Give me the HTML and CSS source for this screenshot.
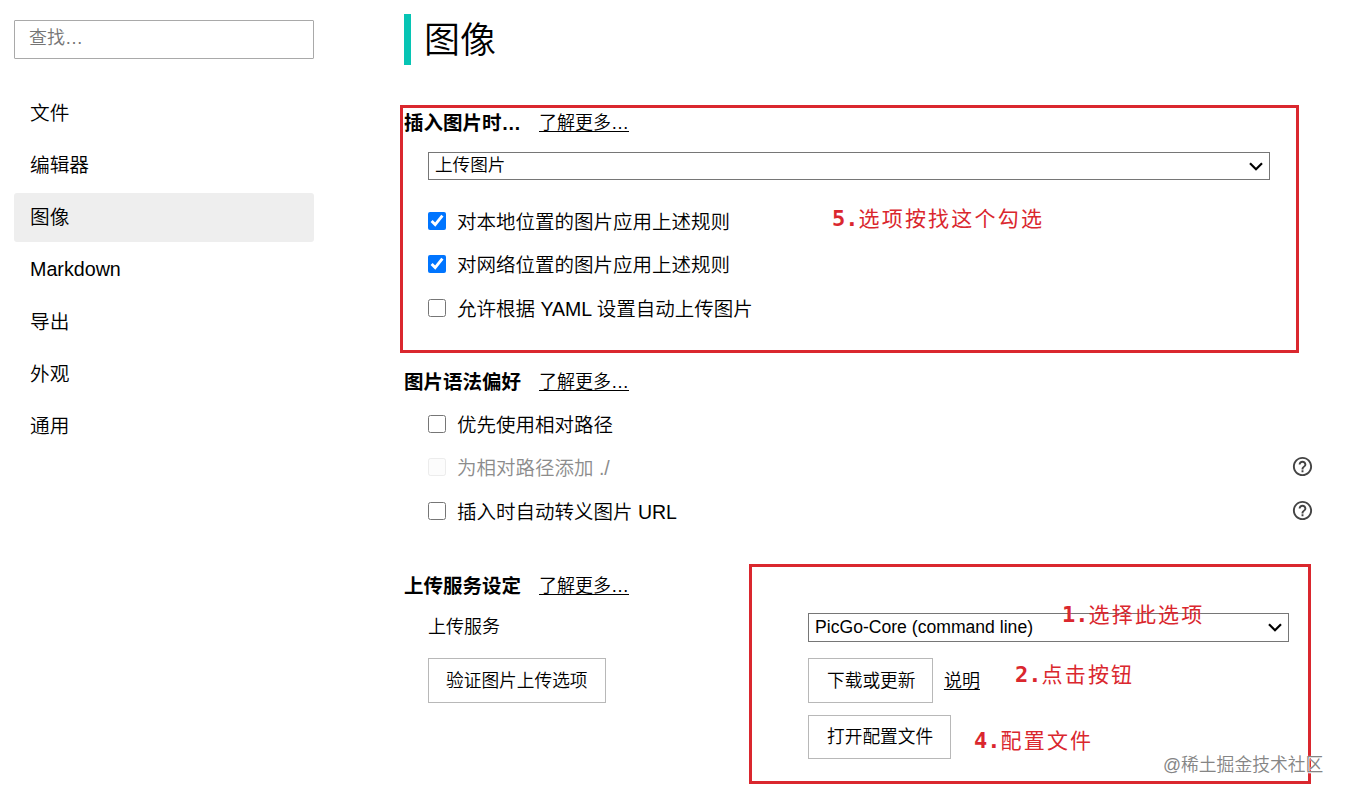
FILE: index.html
```
<!DOCTYPE html>
<html lang="zh-CN">
<head>
    <meta charset="UTF-8">
    <title>图像</title>
    <link rel="stylesheet" href="styles.css">
</head>
<body>
    <div class="page">
        <div class="sidebar">
            <input class="search" type="text" placeholder="查找…">
            <ul class="nav">
                <li>文件</li>
                <li>编辑器</li>
                <li class="active">图像</li>
                <li>Markdown</li>
                <li>导出</li>
                <li>外观</li>
                <li>通用</li>
            </ul>
        </div>

        <div class="content">
            <h1 class="title">图像</h1>

            <!-- Insert -->
            <section class="insert">
                <div class="heading"><h2>插入图片时…</h2><a class="more">了解更多…</a></div>
                <div class="select insert-select">
                    <select><option>上传图片</option></select>
                    <svg class="arrow" viewBox="0 0 14 9"><path d="M1 1.2l6 6 6-6"/></svg>
                </div>
                <label class="option"><input type="checkbox" checked><span>对本地位置的图片应用上述规则</span></label>
                <label class="option"><input type="checkbox" checked><span>对网络位置的图片应用上述规则</span></label>
                <label class="option"><input type="checkbox"><span>允许根据 YAML 设置自动上传图片</span></label>
            </section>

            <!-- Syntax -->
            <section class="syntax">
                <div class="heading"><h2>图片语法偏好</h2><a class="more">了解更多…</a></div>
                <label class="option"><input type="checkbox"><span>优先使用相对路径</span></label>
                <label class="option disabled"><input type="checkbox" disabled><span>为相对路径添加 ./</span>
                    <svg class="help" viewBox="0 0 24 24"><path d="M11 18h2v-2h-2v2zm1-16C6.48 2 2 6.48 2 12s4.48 10 10 10 10-4.48 10-10S17.52 2 12 2zm0 18c-4.41 0-8-3.59-8-8s3.59-8 8-8 8 3.59 8 8-3.59 8-8 8zm0-14c-2.21 0-4 1.79-4 4h2c0-1.1.9-2 2-2s2 .9 2 2c0 2-3 1.75-3 5h2c0-2.25 3-2.5 3-5 0-2.21-1.79-4-4-4z"/></svg>
                </label>
                <label class="option"><input type="checkbox"><span>插入时自动转义图片 URL</span>
                    <svg class="help" viewBox="0 0 24 24"><path d="M11 18h2v-2h-2v2zm1-16C6.48 2 2 6.48 2 12s4.48 10 10 10 10-4.48 10-10S17.52 2 12 2zm0 18c-4.41 0-8-3.59-8-8s3.59-8 8-8 8 3.59 8 8-3.59 8-8 8zm0-14c-2.21 0-4 1.79-4 4h2c0-1.1.9-2 2-2s2 .9 2 2c0 2-3 1.75-3 5h2c0-2.25 3-2.5 3-5 0-2.21-1.79-4-4-4z"/></svg>
                </label>
            </section>

            <!-- Upload service -->
            <section class="upload">
                <div class="heading"><h2>上传服务设定</h2><a class="more">了解更多…</a></div>
                <div class="service">
                    <div class="service-left">
                        <div class="service-label">上传服务</div>
                        <button>验证图片上传选项</button>
                    </div>
                    <div class="service-right">
                        <div class="select service-select">
                            <select><option>PicGo-Core (command line)</option></select>
                            <svg class="arrow" viewBox="0 0 14 9"><path d="M1 1.2l6 6 6-6"/></svg>
                        </div>
                        <div class="actions"><button>下载或更新</button><a class="more">说明</a></div>
                        <button class="open">打开配置文件</button>
                    </div>
                </div>
            </section>
        </div>
    </div>

    <!-- Notes drawn over the page -->
    <div class="frame frame-insert"></div>
    <div class="frame frame-upload"></div>
    <div class="note note-5"><b>5.</b>选项按找这个勾选</div>
    <div class="note note-1"><b>1.</b>选择此选项</div>
    <div class="note note-2"><b>2.</b>点击按钮</div>
    <div class="note note-4"><b>4.</b>配置文件</div>
    <div class="watermark">@稀土掘金技术社区</div>
</body>
</html>
```
FILE: styles.css
```
* {
    box-sizing: border-box;
}

body {
    margin: 0;
    position: relative;
    height: 797px;
    overflow: hidden;
    background: #fff;
    color: #000;
    font-family: "Liberation Sans", "Noto Sans CJK SC", sans-serif;
    font-size: 19.5px;
    font-weight: 350;
}

input,
select,
button {
    font-family: inherit;
    font-weight: inherit;
    color: inherit;
}

.page {
    display: flex;
    gap: 90px;
    padding: 14px 34px 0 14px;
}

/* Sidebar */
.sidebar {
    width: 300px;
    padding-top: 6px;
}

.search {
    display: block;
    width: 300px;
    height: 39px;
    padding: 0 14px 2px;
    border: 1px solid #a9a9a9;
    border-radius: 1px;
    font-size: 18px;
}

.search::placeholder {
    color: #757575;
}

.nav {
    display: flex;
    flex-direction: column;
    gap: 3.25px;
    list-style: none;
    margin: 29.6px 0 0;
    padding: 0;
}

.nav li {
    height: 49px;
    line-height: 48px;
    padding-left: 16px;
    border-radius: 3px;
    font-size: 19.7px;
}

.nav .active {
    background: #eee;
}

/* Content */
.content {
    flex: 1;
}

.title {
    height: 51px;
    margin: 0;
    padding-left: 13px;
    border-left: 7px solid #06c4b4;
    font-size: 36px;
    font-weight: 350;
    line-height: 53px;
}

.heading {
    display: flex;
    align-items: center;
    gap: 18px;
    height: 30px;
    padding-bottom: 2px;
}

.heading h2 {
    margin: 0;
    font-size: 19.5px;
    font-weight: bold;
}

.more {
    font-size: 18px;
    text-decoration: underline;
    text-underline-offset: 2px;
    text-decoration-thickness: 1px;
}

.insert {
    height: 259px;
    padding-top: 42px;
}

.syntax {
    height: 204px;
    padding-top: 42px;
}

.upload {
    padding-top: 42px;
}

.select {
    position: relative;
}

.select select {
    display: block;
    appearance: none;
    width: 100%;
    height: 100%;
    padding: 0 6px 2px;
    border: 1px solid #767676;
    border-radius: 0;
    background: #fff;
    font-size: 17.6px;
}

.arrow {
    position: absolute;
    right: 7px;
    top: 10px;
    width: 14px;
    height: 9px;
    fill: none;
    stroke: #000;
    stroke-width: 2.2;
}

.insert-select {
    width: 842px;
    height: 28px;
    margin: 15px 0 19px 24px;
}

.option {
    display: flex;
    align-items: center;
    height: 43.5px;
    padding-left: 24px;
}

.option span {
    padding-bottom: 1.5px;
}

.syntax .heading {
    margin-bottom: 6px;
}

.option input {
    width: 18px;
    height: 18px;
    margin: 0 11px 0 0;
}

.disabled span {
    color: #8c8c8c;
}

.disabled input {
    opacity: 0.4;
}

.help {
    width: 23px;
    height: 23px;
    margin-left: auto;
    margin-right: -1.5px;
    margin-bottom: 1px;
    fill: #444;
}

.service {
    display: flex;
    padding: 13px 0 0 24px;
}

.service-left {
    width: 380px;
}

.service-label {
    height: 45px;
    line-height: 29px;
    font-size: 18px;
}

.service-select {
    width: 481px;
    height: 29px;
    margin-bottom: 16px;
}

button {
    height: 45px;
    padding: 0 17px 4px 18px;
    border: 1px solid #b8b8b8;
    border-radius: 0;
    background: #fff;
    font-size: 17.7px;
}

.service-left button {
    padding-left: 17px;
}

.actions {
    display: flex;
    align-items: center;
    gap: 10.5px;
    margin-bottom: 12px;
}

.actions .more {
    padding-bottom: 4px;
}

.open {
    height: 44px;
}

/* Notes */
.frame {
    position: absolute;
    border: 3px solid #da272e;
}

.frame-insert {
    left: 400px;
    top: 105px;
    width: 899px;
    height: 248px;
}

.frame-upload {
    left: 749px;
    top: 564px;
    width: 562px;
    height: 220px;
}

.note {
    position: absolute;
    color: #da272e;
    font-family: "Noto Sans CJK SC", sans-serif;
    font-size: 21px;
    font-weight: 400;
    line-height: 30px;
    letter-spacing: 2.2px;
    white-space: nowrap;
}

.note b {
    font-family: "DejaVu Sans Mono", monospace;
    font-size: 22px;
    letter-spacing: 0;
}

.note-5 {
    left: 832px;
    top: 202px;
}

.note-1 {
    left: 1062px;
    top: 598px;
}

.note-2 {
    left: 1015px;
    top: 658px;
}

.note-4 {
    left: 974px;
    top: 724px;
}

.watermark {
    position: absolute;
    left: 1163px;
    top: 752px;
    color: #858585;
    font-size: 17.8px;
    line-height: 26px;
    text-shadow: 0 0 1px #fff, 1px 1px 0 #fff;
    white-space: nowrap;
}
```
